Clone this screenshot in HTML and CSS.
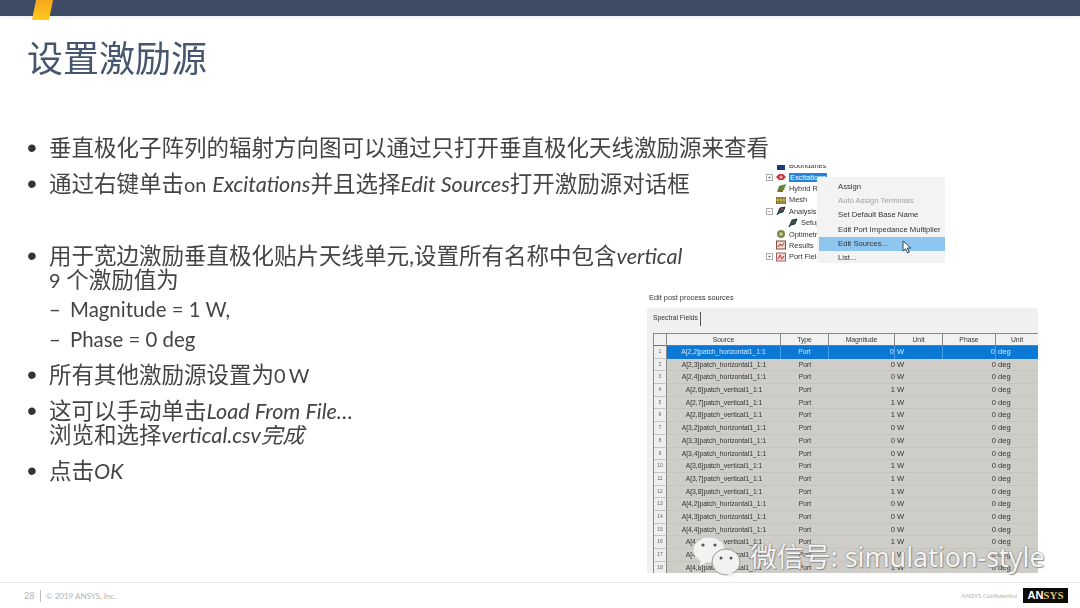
FILE: index.html
```html
<!DOCTYPE html>
<html lang="zh">
<head>
<meta charset="utf-8">
<title>设置激励源</title>
<link rel="stylesheet" href="styles.css">
</head>
<body>
<div class="slide">
  <header class="topbar"><span class="slash"></span></header>
  <main class="main">
    <section class="content">
      <h1 class="title">设置激励源</h1>
      <ul class="bullets">
        <li>垂直极化子阵列的辐射方向图可以通过只打开垂直极化天线激励源来查看</li>
        <li>通过右键单击<span class="la">on</span> <i>Excitations</i>并且选择<i>Edit Sources</i>打开激励源对话框</li>
        <li class="blank">&nbsp;</li>
        <li>用于宽边激励垂直极化贴片天线单元,设置所有名称中包含<i>vertical</i><br><span class="la">9</span> 个激励值为
          <ul class="sub">
            <li>Magnitude = 1 W,</li>
            <li>Phase = 0 deg</li>
          </ul>
        </li>
        <li>所有其他激励源设置为<span class="la">0 W</span></li>
        <li>这可以手动单击<i>Load From File…</i><br>浏览和选择<i>vertical.csv完成</i></li>
        <li>点击<i>OK</i></li>
      </ul>
    </section>
    <aside class="figures">
      <div class="shot-menu">
        <ul class="tree">
          <li><span class="exp"></span><svg class="ti" viewBox="0 0 12 10"><rect x="2" y="1" width="8" height="8" fill="#223a78"/></svg>Boundaries</li>
          <li><span class="exp">+</span><svg class="ti" viewBox="0 0 12 10"><path d="M1 5 4 2h4l3 3-3 3H4z" fill="#c8343a"/><circle cx="6" cy="5" r="1.5" fill="#e8c0c0"/></svg><span class="tsel">Excitations</span></li>
          <li><span class="exp"></span><svg class="ti" viewBox="0 0 12 10"><path d="M2 9 4 3l7-2-2 6z" fill="#5d8a3a"/><path d="M3 9h5V6H3z" fill="#8a6a2a"/></svg>Hybrid Re</li>
          <li><span class="exp"></span><svg class="ti" viewBox="0 0 12 10"><rect x="1" y="2" width="10" height="7" fill="#6f6a24"/><path d="M3 2v7M6 2v7M9 2v7M1 5h10" stroke="#d8c060"/></svg>Mesh</li>
          <li><span class="exp">−</span><svg class="ti" viewBox="0 0 12 10"><path d="M2 9 5 2l5-1-2 5-4 1z" fill="#2f4a6a" stroke="#22382a"/><circle cx="7" cy="3" r="1" fill="#c84040"/></svg>Analysis</li>
          <li class="ind"><svg class="ti" viewBox="0 0 12 10"><path d="M2 9 5 2l5-1-2 5-4 1z" fill="#35525c" stroke="#22382a"/></svg>Setup</li>
          <li><span class="exp"></span><svg class="ti" viewBox="0 0 12 10"><circle cx="6" cy="5" r="4" fill="#7a8a44"/><circle cx="6" cy="5" r="1.8" fill="#d0c890"/></svg>Optimetri</li>
          <li><span class="exp"></span><svg class="ti" viewBox="0 0 12 10"><rect x="1.5" y="1" width="9" height="8" fill="#e8d8d0" stroke="#805040"/><path d="M3 7 5 4l2 2 2-3" stroke="#b03030" fill="none"/></svg>Results</li>
          <li><span class="exp">+</span><svg class="ti" viewBox="0 0 12 10"><rect x="1.5" y="1" width="9" height="8" fill="#f0d8d8" stroke="#a06060"/><path d="M3 7 5 3l2 4 2-3" stroke="#c03030" fill="none"/></svg>Port Field</li>
        </ul>
        <ul class="menu">
          <li>Assign</li>
          <li class="off">Auto Assign Terminals</li>
          <li>Set Default Base Name</li>
          <li>Edit Port Impedance Multiplier</li>
          <li class="on">Edit Sources...<svg class="cursor" viewBox="0 0 10 14"><path d="M1 1v10l2.5-2.2L5.5 13l1.8-.8-2-4.2H9z" fill="#fff" stroke="#345"/></svg></li>
          <li>List...</li>
        </ul>
      </div>
      <p class="caption">Edit post process sources</p>
      <div class="panel">
        <div class="tabs"><span class="tab">Spectral Fields</span></div>
        <div class="grid">
          <div class="h"></div><div class="h">Source</div><div class="h">Type</div><div class="h">Magnitude</div><div class="h">Unit</div><div class="h">Phase</div><div class="h">Unit</div>

          <div class="n">1</div><div class="c sel">A[2,2]patch_horizontal1_1:1</div><div class="c sel">Port</div><div class="c sel r">0</div><div class="c sel l">W</div><div class="c sel r">0</div><div class="c sel l">deg</div>
          <div class="n">2</div><div class="c">A[2,3]patch_horizontal1_1:1</div><div class="c">Port</div><div class="c r">0</div><div class="c l">W</div><div class="c r">0</div><div class="c l">deg</div>
          <div class="n">3</div><div class="c">A[2,4]patch_horizontal1_1:1</div><div class="c">Port</div><div class="c r">0</div><div class="c l">W</div><div class="c r">0</div><div class="c l">deg</div>
          <div class="n">4</div><div class="c">A[2,6]patch_vertical1_1:1</div><div class="c">Port</div><div class="c r">1</div><div class="c l">W</div><div class="c r">0</div><div class="c l">deg</div>
          <div class="n">5</div><div class="c">A[2,7]patch_vertical1_1:1</div><div class="c">Port</div><div class="c r">1</div><div class="c l">W</div><div class="c r">0</div><div class="c l">deg</div>
          <div class="n">6</div><div class="c">A[2,8]patch_vertical1_1:1</div><div class="c">Port</div><div class="c r">1</div><div class="c l">W</div><div class="c r">0</div><div class="c l">deg</div>
          <div class="n">7</div><div class="c">A[3,2]patch_horizontal1_1:1</div><div class="c">Port</div><div class="c r">0</div><div class="c l">W</div><div class="c r">0</div><div class="c l">deg</div>
          <div class="n">8</div><div class="c">A[3,3]patch_horizontal1_1:1</div><div class="c">Port</div><div class="c r">0</div><div class="c l">W</div><div class="c r">0</div><div class="c l">deg</div>
          <div class="n">9</div><div class="c">A[3,4]patch_horizontal1_1:1</div><div class="c">Port</div><div class="c r">0</div><div class="c l">W</div><div class="c r">0</div><div class="c l">deg</div>
          <div class="n">10</div><div class="c">A[3,6]patch_vertical1_1:1</div><div class="c">Port</div><div class="c r">1</div><div class="c l">W</div><div class="c r">0</div><div class="c l">deg</div>
          <div class="n">11</div><div class="c">A[3,7]patch_vertical1_1:1</div><div class="c">Port</div><div class="c r">1</div><div class="c l">W</div><div class="c r">0</div><div class="c l">deg</div>
          <div class="n">12</div><div class="c">A[3,8]patch_vertical1_1:1</div><div class="c">Port</div><div class="c r">1</div><div class="c l">W</div><div class="c r">0</div><div class="c l">deg</div>
          <div class="n">13</div><div class="c">A[4,2]patch_horizontal1_1:1</div><div class="c">Port</div><div class="c r">0</div><div class="c l">W</div><div class="c r">0</div><div class="c l">deg</div>
          <div class="n">14</div><div class="c">A[4,3]patch_horizontal1_1:1</div><div class="c">Port</div><div class="c r">0</div><div class="c l">W</div><div class="c r">0</div><div class="c l">deg</div>
          <div class="n">15</div><div class="c">A[4,4]patch_horizontal1_1:1</div><div class="c">Port</div><div class="c r">0</div><div class="c l">W</div><div class="c r">0</div><div class="c l">deg</div>
          <div class="n">16</div><div class="c">A[4,6]patch_vertical1_1:1</div><div class="c">Port</div><div class="c r">1</div><div class="c l">W</div><div class="c r">0</div><div class="c l">deg</div>
          <div class="n">17</div><div class="c">A[4,7]patch_vertical1_1:1</div><div class="c">Port</div><div class="c r">1</div><div class="c l">W</div><div class="c r">0</div><div class="c l">deg</div>
          <div class="n">18</div><div class="c">A[4,8]patch_vertical1_1:1</div><div class="c">Port</div><div class="c r">1</div><div class="c l">W</div><div class="c r">0</div><div class="c l">deg</div>
        </div>
      </div>
    </aside>
  </main>
  <footer class="footer">
    <span class="page">28</span><span class="copy">© 2019 ANSYS, Inc.</span>
    <span class="conf">ANSYS Confidential</span>
    <span class="logo">AN<b>SYS</b></span>
  </footer>
  <div class="watermark">
    <svg class="wechat" viewBox="0 0 48 42">
      <ellipse cx="16" cy="14" rx="16" ry="13" fill="#f2f2f0" stroke="#bbb" stroke-width=".6"/>
      <path d="M8 24 6 31l8-5z" fill="#f2f2f0"/>
      <ellipse cx="33" cy="26" rx="14" ry="13" fill="#f2f2f0" stroke="#999" stroke-width="1"/>
      <path d="M39 37l4 5-9-3z" fill="#f2f2f0"/>
      <circle cx="10" cy="9" r="1.6" fill="#555"/><circle cx="22" cy="9" r="1.6" fill="#555"/>
      <circle cx="28" cy="22" r="1.5" fill="#555"/><circle cx="38" cy="22" r="1.5" fill="#555"/>
    </svg>
    <span class="wtext">微信号: simulation-style</span>
  </div>
</div>
</body>
</html>
```
FILE: styles.css
```css
* { box-sizing: border-box; }
html, body { margin: 0; padding: 0; background: #fff; }
ul { list-style: none; margin: 0; padding: 0; }
.slide {
  position: relative;
  width: 1080px;
  height: 608px;
  overflow: hidden;
  display: flex;
  flex-direction: column;
  font-family: "Lato", "Noto Sans CJK SC", sans-serif;
  color: #444;
  background: #fff;
}
.topbar {
  position: relative;
  height: 16px;
  flex: none;
  background: #3d4b65;
  box-shadow: 0 2px 3px #eef0f4;
}
.slash {
  position: absolute;
  left: 32px;
  top: 0;
  width: 21px;
  height: 20px;
  background: linear-gradient(#f6a71e, #fdc91c);
  clip-path: polygon(4px 0, 21px 0, 17px 20px, 0 20px);
}
.main {
  flex: 1;
  display: grid;
  min-height: 0;
}
.content, .figures { grid-area: 1 / 1; min-width: 0; }
.content { padding-left: 28px; filter: blur(.25px); }
.title {
  margin: 16px 0 0 -1px;
  height: 48px;
  font-size: 36px;
  line-height: 48px;
  font-weight: 400;
  color: #46566f;
  font-family: "Noto Sans CJK SC", sans-serif;
}
.bullets { margin-top: 56px; font-size: 22.5px; line-height: 24px; white-space: nowrap; }
.bullets > li { position: relative; padding-left: 21px; margin-bottom: 12px; }
.bullets > li::before { content: "•"; position: absolute; left: -1px; top: 0; font-family: "Liberation Sans", sans-serif; font-size: 28px; color: #333; }
.bullets > li.blank::before { content: none; }
.bullets i { font-size: 21.6px; }
.la { font-size: 20px; word-spacing: -2px; }
.sub { font-size: 20.4px; margin-bottom: 1px; }
.sub li { position: relative; padding-left: 21px; margin-top: 5px; }
.sub li + li { margin-top: 6px; }
.sub li::before { content: "–"; position: absolute; left: 0; top: 0; }
.figures {
  display: flex;
  flex-direction: column;
  align-items: flex-start;
  justify-self: end;
  width: 391px;
  margin-right: 42px;
  padding-top: 149px;
}
.shot-menu {
  position: relative;
  margin-left: 118px;
  width: 180px;
  height: 98px;
  font-family: "Liberation Sans", sans-serif;
  font-size: 7.4px;
  color: #333;
  filter: blur(.35px);
  overflow: hidden;
}
.tree { margin-top: -5px; }
.tree li { display: flex; align-items: center; height: 11.4px; padding-left: 1px; gap: 2px; }
.tree .ind { padding-left: 22px; }
.exp {
  width: 7px;
  height: 7px;
  flex: none;
  margin-right: 0;
  font-size: 6px;
  line-height: 6px;
  text-align: center;
  color: #555;
}
.exp:not(:empty) { border: 1px solid #aaa; line-height: 5px; }
.ti { width: 12px; height: 10px; flex: none; }
.tsel { background: #2a7fd8; color: #fff; padding: 0 1px; }
.menu {
  position: absolute;
  left: 52px;
  top: 12px;
  width: 128px;
  height: 86px;
  background: #f3f3f3;
  padding: 3px 0 0 2px;
  font-size: 7.7px;
}
.menu li { position: relative; height: 14.2px; line-height: 14.2px; padding-left: 19px; }
.menu .off { color: #a0a0a0; }
.menu .on { background: #8fc6ef; width: 126px; }
.cursor { position: absolute; left: 83px; top: 3px; width: 10px; height: 14px; }
.caption {
  margin: 30px 0 0 2px;
  height: 15px;
  font-family: "Liberation Sans", sans-serif;
  font-size: 7.4px;
  line-height: 10px;
  color: #333;
  filter: blur(.3px);
}
.panel {
  width: 391px;
  height: 265px;
  background: #f0f0f1;
  padding-left: 6px;
  overflow: hidden;
  font-family: "Liberation Sans", sans-serif;
  font-size: 6.8px;
  color: #333;
  filter: blur(.35px);
}
.tabs { height: 25px; padding-top: 4px; }
.tab { display: inline-block; height: 14px; line-height: 12px; padding-right: 2px; border-right: 1px solid #555; }
.grid {
  display: grid;
  grid-template-columns: 13px 114px 48px 66px 48px 53px 43px;
  grid-template-rows: 13px;
  grid-auto-rows: 12.7px;
  border-left: 1px solid #888;
  width: 385px;
}
.h {
  background: #f1f1f1;
  border-top: 1px solid #888;
  border-right: 1px solid #888;
  border-bottom: 1px solid #777;
  text-align: center;
  line-height: 11px;
}
.h:last-of-type { border-right: 0; }
.n {
  background: #eeeeee;
  border-right: 1px solid #888;
  border-bottom: 1px solid #c4c4c4;
  text-align: center;
  font-size: 5px;
  line-height: 11px;
  color: #666;
}
.c {
  background: #cfcdc8;
  border-bottom: 1px solid #c6c4bf;
  text-align: center;
  line-height: 12.4px;
}
.c.r { text-align: right; font-size: 7.6px; }
.c.l { text-align: left; padding-left: 2px; font-size: 7.6px; }
.c.sel { background: #0a78d4; color: #d4e8fa; border-bottom: 0; border-right: 1px solid #4a9ce0; }
.footer {
  flex: none;
  height: 26px;
  border-top: 1px solid #e8e8e8;
  display: flex;
  align-items: center;
  padding: 0 12px 0 24px;
  font-family: "Lato", sans-serif;
  font-size: 8px;
  color: #b4b4b4;
}
.page { width: 17px; height: 12px; line-height: 12px; font-size: 9px; border-right: 1px solid #bbb; margin-right: 5px; }
.copy { flex: 1; }
.conf { margin-right: 6px; font-size: 6.4px; }
.logo {
  width: 45px;
  height: 15px;
  background: #0b0b0b;
  color: #fff;
  font-family: "Liberation Sans", sans-serif;
  font-weight: 700;
  font-size: 11px;
  line-height: 15px;
  text-align: center;
}
.logo b { color: #d8c070; font-family: "Liberation Serif", serif; }
.watermark {
  position: absolute;
  left: 693px;
  top: 536px;
  display: flex;
  align-items: center;
  gap: 9px;
}
.wechat { width: 48px; height: 42px; flex: none; }
.wtext {
  font-family: "Noto Sans", "Noto Sans CJK SC", sans-serif;
  font-size: 26.85px;
  line-height: 42px;
  white-space: nowrap;
  color: #f4f4f2;
  text-shadow: 0 0 2px #777, 1px 1px 1px #999;
}
```
